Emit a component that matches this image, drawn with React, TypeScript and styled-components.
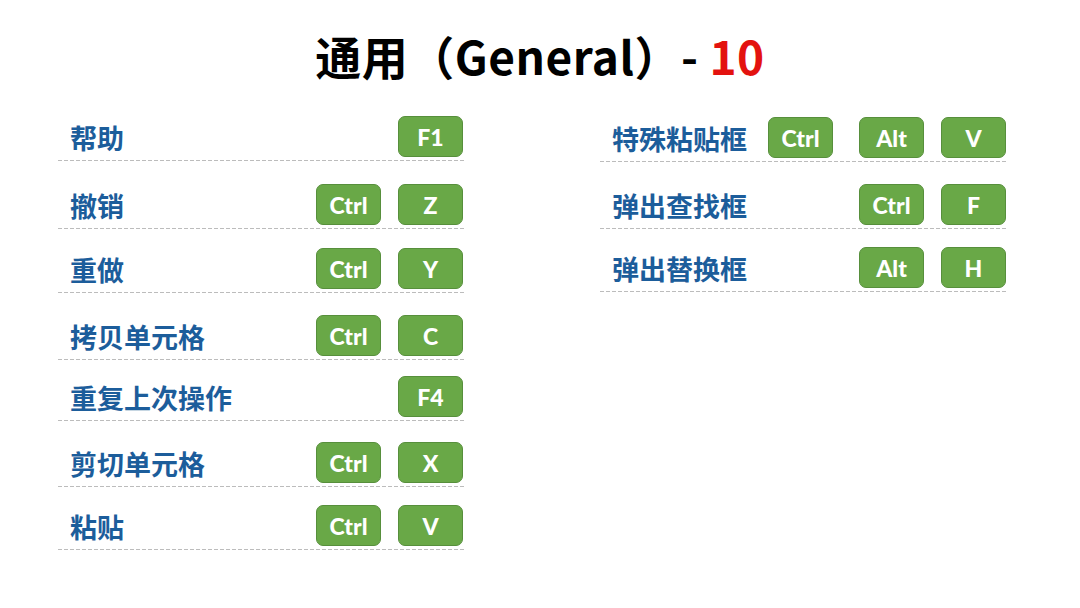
import React from 'react';
import styled, { createGlobalStyle } from 'styled-components';

const GlobalStyle = createGlobalStyle`
  body {
    margin: 0;
    background: #ffffff;
    font-family: "Noto Sans CJK SC", "Noto Sans", sans-serif;
  }
`;

const Page = styled.div`
  width: 1080px;
  height: 608px;
  background: #ffffff;
  overflow: hidden;
`;

const Title = styled.h1`
  margin: 0;
  padding: 24px 0 10px;
  line-height: 62px;
  font-size: 46px;
  font-weight: 700;
  color: #000000;
  text-align: center;
  letter-spacing: 0.5px;
`;

const Count = styled.span`
  color: #e3120f;
`;

const Columns = styled.div`
  display: grid;
  grid-template-columns: 406px 407px;
  column-gap: 136px;
  padding-left: 58px;
  align-items: start;
`;

const List = styled.div`
  display: flex;
  flex-direction: column;
`;

const Row = styled.div<{ $height: number }>`
  display: flex;
  align-items: flex-end;
  height: ${({ $height }) => $height}px;
  box-sizing: border-box;
  padding: 0 1px 4px 12px;
  background: repeating-linear-gradient(
      to right,
      #bcbcbc 0 4px,
      transparent 4px 6px
    )
    left bottom / 100% 1px no-repeat;
`;

const Label = styled.span`
  flex: 1;
  margin-bottom: -1px;
  line-height: 40px;
  font-size: 27px;
  font-weight: 700;
  color: #1c5d9b;
`;

const Keys = styled.div<{ $gap: number }>`
  display: flex;
  gap: ${({ $gap }) => $gap}px;
`;

const Key = styled.div<{ $extra?: number }>`
  width: 65px;
  height: 41px;
  box-sizing: border-box;
  margin-right: ${({ $extra }) => $extra || 0}px;
  display: flex;
  align-items: center;
  justify-content: center;
  border-radius: 7px;
  border: 1px solid #578f3c;
  background: #69a847;
  color: #ffffff;
  font-family: Lato, "Open Sans", sans-serif;
  font-size: 23px;
  font-weight: 900;
`;

type Shortcut = { label: string; keys: string[]; height: number; extra?: number };

const left: Shortcut[] = [
  { label: '帮助', keys: ['F1'], height: 65 },
  { label: '撤销', keys: ['Ctrl', 'Z'], height: 68 },
  { label: '重做', keys: ['Ctrl', 'Y'], height: 64 },
  { label: '拷贝单元格', keys: ['Ctrl', 'C'], height: 67 },
  { label: '重复上次操作', keys: ['F4'], height: 61 },
  { label: '剪切单元格', keys: ['Ctrl', 'X'], height: 66 },
  { label: '粘贴', keys: ['Ctrl', 'V'], height: 63 },
];

const right: Shortcut[] = [
  { label: '特殊粘贴框', keys: ['Ctrl', 'Alt', 'V'], height: 66, extra: 9 },
  { label: '弹出查找框', keys: ['Ctrl', 'F'], height: 67 },
  { label: '弹出替换框', keys: ['Alt', 'H'], height: 63 },
];

const ShortcutList: React.FC<{ items: Shortcut[]; gap: number }> = ({ items, gap }) => (
  <List>
    {items.map((item) => (
      <Row key={item.label} $height={item.height}>
        <Label>{item.label}</Label>
        <Keys $gap={gap}>
          {item.keys.map((k, i) => (
            <Key key={k + i} $extra={i === 0 ? item.extra : 0}>
              {k}
            </Key>
          ))}
        </Keys>
      </Row>
    ))}
  </List>
);

const App: React.FC = () => {
  return (
    <Page>
      <GlobalStyle />
      <Title>
        通用（General）- <Count>10</Count>
      </Title>
      <Columns>
        <ShortcutList items={left} gap={17} />
        <ShortcutList items={right} gap={17} />
      </Columns>
    </Page>
  );
};

export default App;
